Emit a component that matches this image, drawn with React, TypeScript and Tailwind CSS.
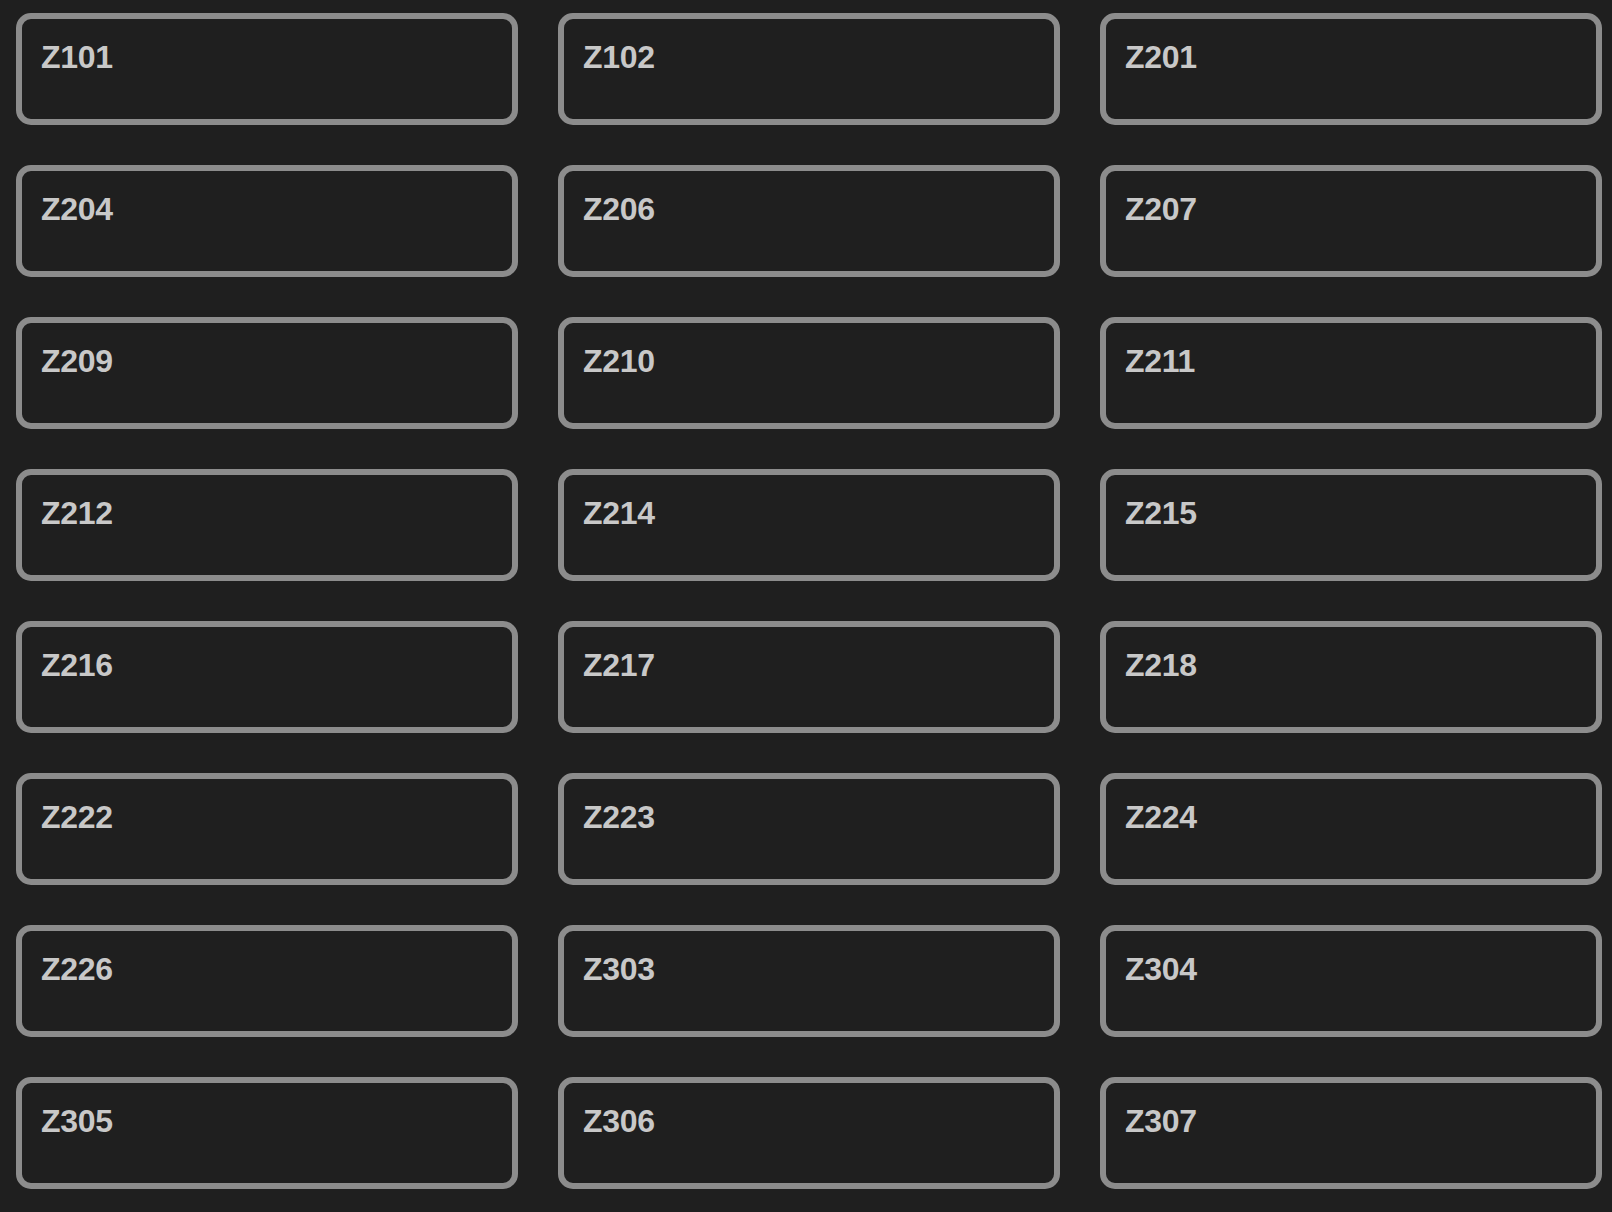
const labels = [
  "Z101", "Z102", "Z201",
  "Z204", "Z206", "Z207",
  "Z209", "Z210", "Z211",
  "Z212", "Z214", "Z215",
  "Z216", "Z217", "Z218",
  "Z222", "Z223", "Z224",
  "Z226", "Z303", "Z304",
  "Z305", "Z306", "Z307",
];

export default function App() {
  return (
    <div className="min-h-[1212px] w-[1612px] bg-[#1f1f1f] pl-[16px] pr-[10px] pt-[13px] pb-[24px]" style={{ fontFamily: '"Liberation Sans", Arial, sans-serif' }}>
      <div className="grid grid-cols-3 gap-x-[40px] gap-y-[40px]">
        {labels.map((l) => (
          <div
            key={l}
            className="h-[112px] rounded-[15px] border-[6px] border-[#8c8c8c] bg-[#1f1f1f] pl-[19px] pr-[20px] pt-[20px]"
          >
            <div className="text-[32px] font-bold leading-[37px] tracking-[-0.3px] text-[#c8c8c8]">{l}</div>
          </div>
        ))}
      </div>
    </div>
  );
}
